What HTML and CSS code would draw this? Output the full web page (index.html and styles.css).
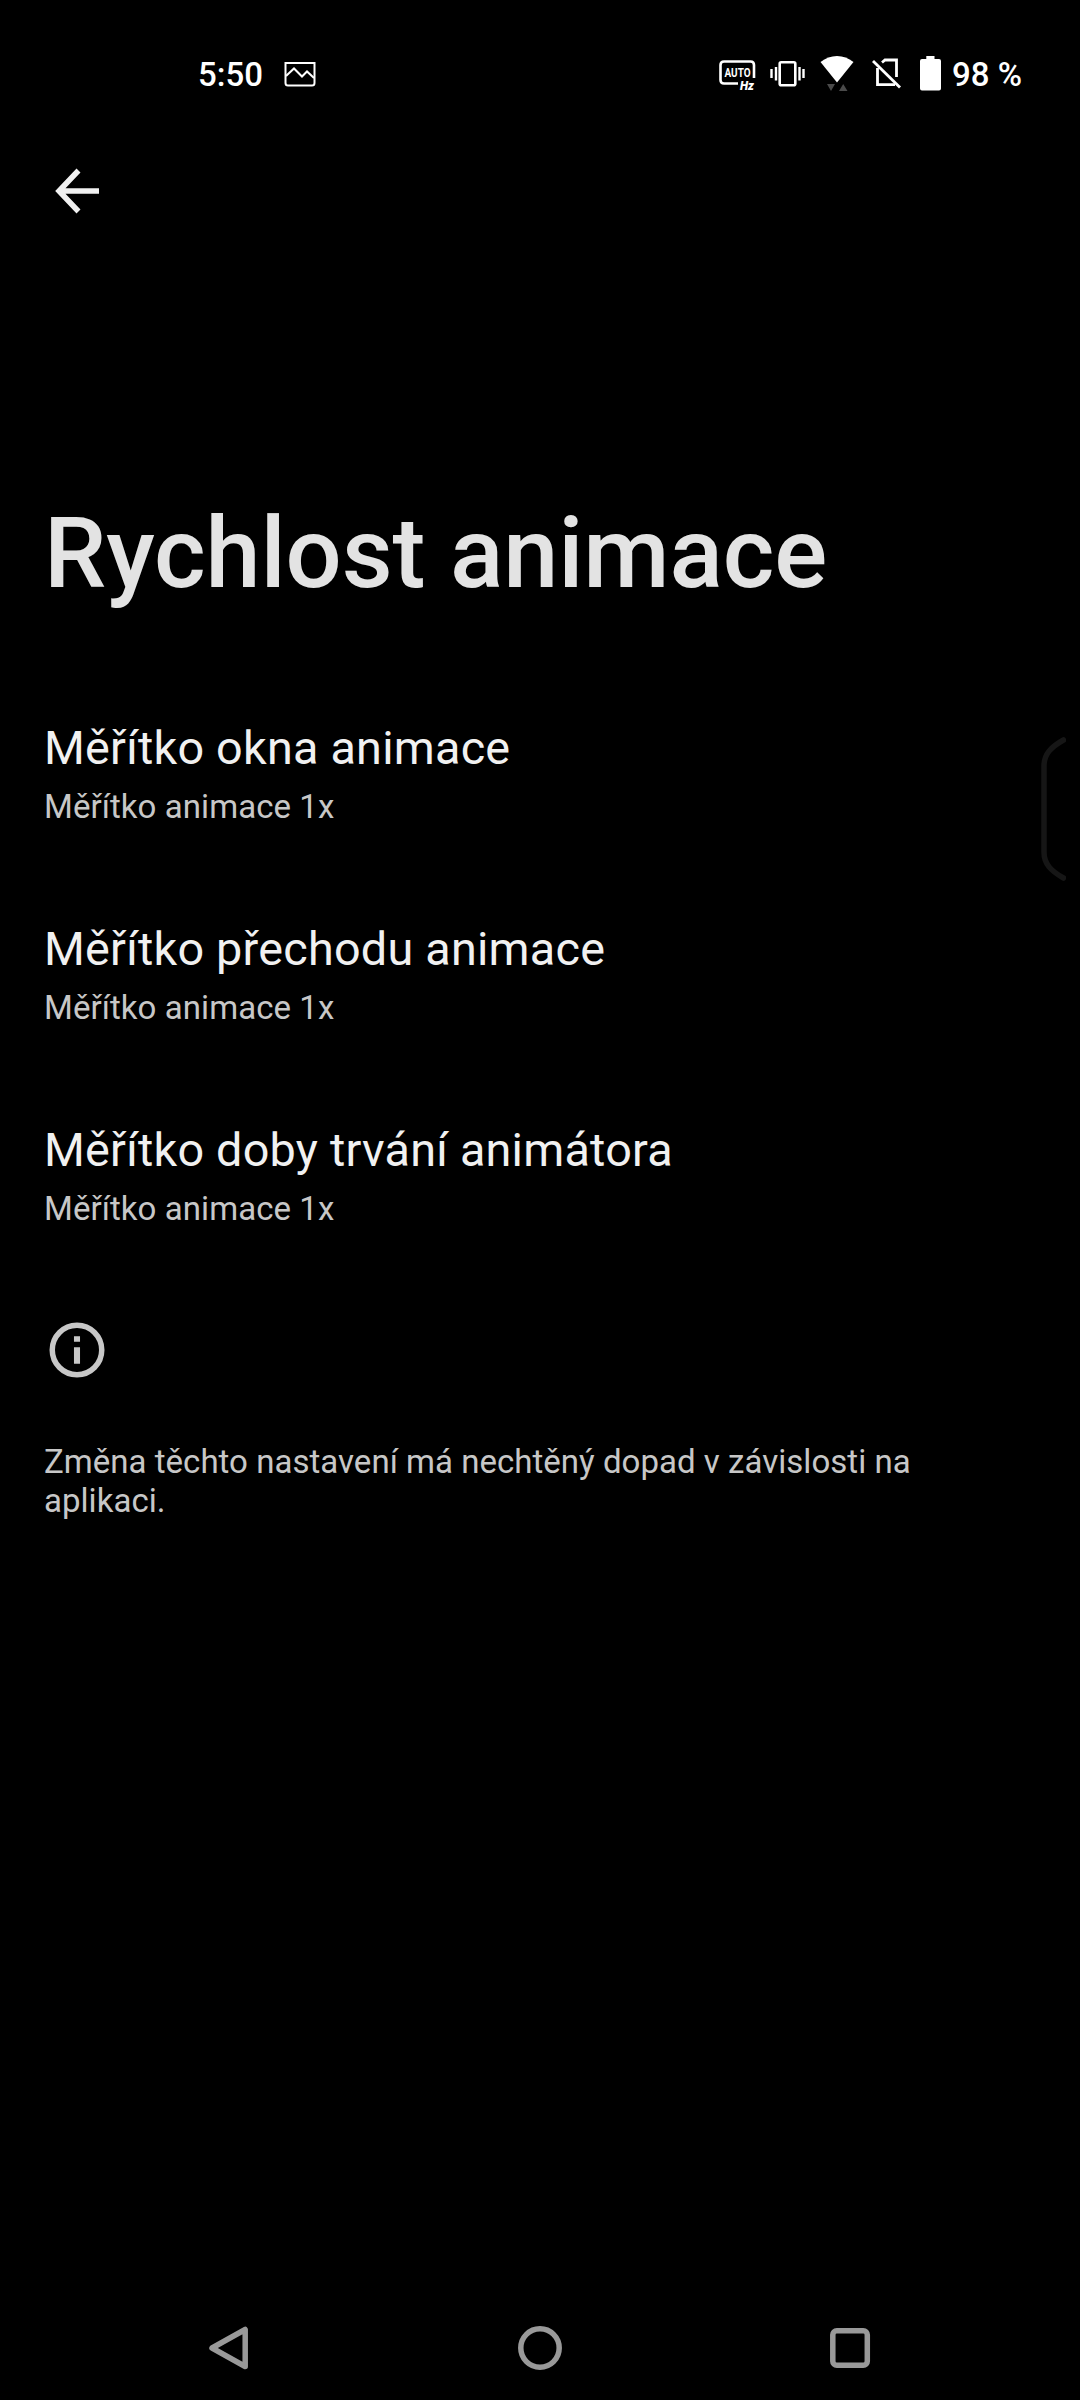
FILE: index.html
```html
<!DOCTYPE html>
<html lang="cs">
<head>
    <meta charset="UTF-8">
    <meta name="viewport" content="width=device-width, initial-scale=1.0">
    <title>Rychlost animace</title>
    <link rel="stylesheet" href="styles.css">
</head>
<body>
    <div class="screen">
        <div class="status">
            <span class="time">5:50</span>
            <svg class="picture" width="32" height="36" viewBox="0 0 32 36" fill="none" stroke="#fff" stroke-width="2">
                <path d="M1.500 7H30.500V27q0 2.500-2.500 2.500H4q-2.500 0-2.500-2.500Z"/>
                <path d="M2 20L10 12.500L18 20.500L23 15.500L30 22"/>
            </svg>
            <div class="icons">
                <svg width="38" height="36" viewBox="0 0 38 36">
                    <path d="M19 27.500H5q-3.500 0-3.500-3.500V9q0-3.500 3.500-3.500H31.500q3.500 0 3.500 3.500V22" fill="none" stroke="#fff" stroke-width="2.600"/>
                    <text class="auto" x="5.500" y="21.300" textLength="26" lengthAdjust="spacingAndGlyphs">AUTO</text>
                    <text class="hz" x="21" y="34" textLength="14" lengthAdjust="spacingAndGlyphs">Hz</text>
                </svg>
                <svg class="vibrate" width="36" height="36" viewBox="0 0 36 36" fill="none" stroke="#fff">
                    <rect x="9.700" y="6.200" width="15.600" height="23" rx="1.500" stroke-width="2.600"/>
                    <path d="M1.500 13V22M33.500 13V22M6 11V24.500M29.500 11V24.500" stroke-width="2.400"/>
                </svg>
                <svg class="wifi" width="34" height="36" viewBox="0 0 34 36">
                    <path d="M.500 6Q8 0 17 0T33.500 6L17 26.500Z" fill="#fff"/>
                    <path d="M7 28H15L11 35ZM19 35H27.500L23.200 28Z" fill="#4a4a4a"/>
                </svg>
                <svg class="sim" width="30" height="36" viewBox="0 0 30 36" fill="none" stroke="#fff" stroke-width="2.800">
                    <path d="M10 6.500L13 4H24.500V21M23 28.700H5.500V12"/>
                    <path d="M1 5L28 31.500"/>
                </svg>
                <svg class="battery" width="21" height="36" viewBox="0 0 21 36" fill="#fff">
                    <path d="M6.300 0H14.500V3H19q2 0 2 2V32.500q0 2-2 2H2q-2 0-2-2V5q0-2 2-2H6.300Z"/>
                </svg>
                <span class="percent">98 %</span>
            </div>
        </div>

        <div class="toolbar">
            <svg width="50" height="50" viewBox="0 0 50 50" fill="none" stroke="#f1f1f1" stroke-width="5.500">
                <path d="M27.500 4.500L8 25L27.500 45.500M8 25H48"/>
            </svg>
        </div>

        <h1>Rychlost animace</h1>

        <div class="list">
            <div class="item">
                <h2>Měřítko okna animace</h2>
                <p>Měřítko animace 1x</p>
            </div>
            <div class="item">
                <h2>Měřítko přechodu animace</h2>
                <p>Měřítko animace 1x</p>
            </div>
            <div class="item">
                <h2>Měřítko doby trvání animátora</h2>
                <p>Měřítko animace 1x</p>
            </div>
        </div>

        <div class="footer">
            <svg width="66" height="66" viewBox="0 0 24 24" fill="#c7c7c7">
                <path d="M10.900 7h2.200v2h-2.200zM10.900 11h2.200v6h-2.200z"/>
                <circle cx="12" cy="12" r="9" fill="none" stroke="#c7c7c7" stroke-width="2"/>
            </svg>
            <p>Změna těchto nastavení má nechtěný dopad v závislosti na aplikaci.</p>
        </div>

        <div class="nav">
            <svg width="44" height="44" viewBox="0 0 44 44">
                <path d="M37.200 3.500V40.500L4 22Z"/>
            </svg>
            <svg width="44" height="44" viewBox="0 0 44 44">
                <circle cx="22" cy="22" r="19.200"/>
            </svg>
            <svg width="44" height="44" viewBox="0 0 44 44">
                <rect x="4.800" y="4.800" width="34.500" height="34.500" rx="4"/>
            </svg>
        </div>

        <!-- edge panel handle -->
        <svg class="handle" width="26" height="146" viewBox="0 0 26 146">
            <path d="M23.500 4C11 11 4 18 4 30V116C4 128 11 135 23.500 142"/>
        </svg>
    </div>
</body>
</html>
```
FILE: styles.css
```css
*{
    padding: 0;
    margin: 0;
    box-sizing: border-box;
}
body{
    background: #000;
    font-family: Roboto, sans-serif;
}
.screen{
    position: relative;
    width: 1080px;
    height: 2400px;
    display: flex;
    flex-direction: column;
    overflow: hidden;
}
svg{
    display: block;
    flex: none;
}
.status{
    height: 148px;
    padding-left: 198px;
    padding-right: 58px;
    display: flex;
    align-items: center;
    color: #fff;
    font-size: 33px;
    font-weight: 500;
}
.picture{
    margin-left: 21px;
}
.icons{
    margin-left: auto;
    display: flex;
    align-items: center;
}
.auto{
    fill: #fff;
    font-size: 12.5px;
    font-weight: 700;
}
.hz{
    fill: #fff;
    font-size: 12px;
    font-weight: 900;
    font-style: italic;
}
.vibrate{
    margin-left: 13px;
}
.wifi{
    margin-left: 14px;
}
.sim{
    margin-left: 18px;
}
.battery{
    margin-left: 18px;
}
.percent{
    margin-left: 10.5px;
    white-space: nowrap;
}
.toolbar{
    height: 342px;
    padding: 18px 0 0 51px;
}
h1{
    height: 204px;
    padding-left: 44px;
    padding-top: 5px;
    color: #e3e3e3;
    font-size: 99px;
    font-weight: 500;
    line-height: 116px;
    letter-spacing: -0.1px;
}
.item{
    height: 201px;
    padding: 27px 44px 0;
}
.item h2{
    color: #f1f1f1;
    font-size: 46.75px;
    font-weight: 400;
    line-height: 55px;
    letter-spacing: 0.23px;
}
.item p{
    margin-top: 11px;
    color: #c7c7c7;
    font-size: 33px;
    line-height: 39px;
    letter-spacing: 0.07px;
}
.footer{
    padding: 20px 44px 0;
}
.footer p{
    margin-top: 59px;
    color: #c7c7c7;
    font-size: 33px;
    line-height: 39px;
    letter-spacing: 0.03px;
}
.nav{
    margin-top: auto;
    height: 104px;
    padding: 0 208px;
    display: flex;
    justify-content: space-between;
    align-items: center;
}
.nav svg{
    fill: none;
    stroke: #999;
    stroke-width: 5.5;
    stroke-linejoin: round;
}
.handle{
    position: absolute;
    left: 1040px;
    top: 736px;
    fill: none;
    stroke: #161616;
    stroke-width: 5.5;
    stroke-linecap: round;
}
```
